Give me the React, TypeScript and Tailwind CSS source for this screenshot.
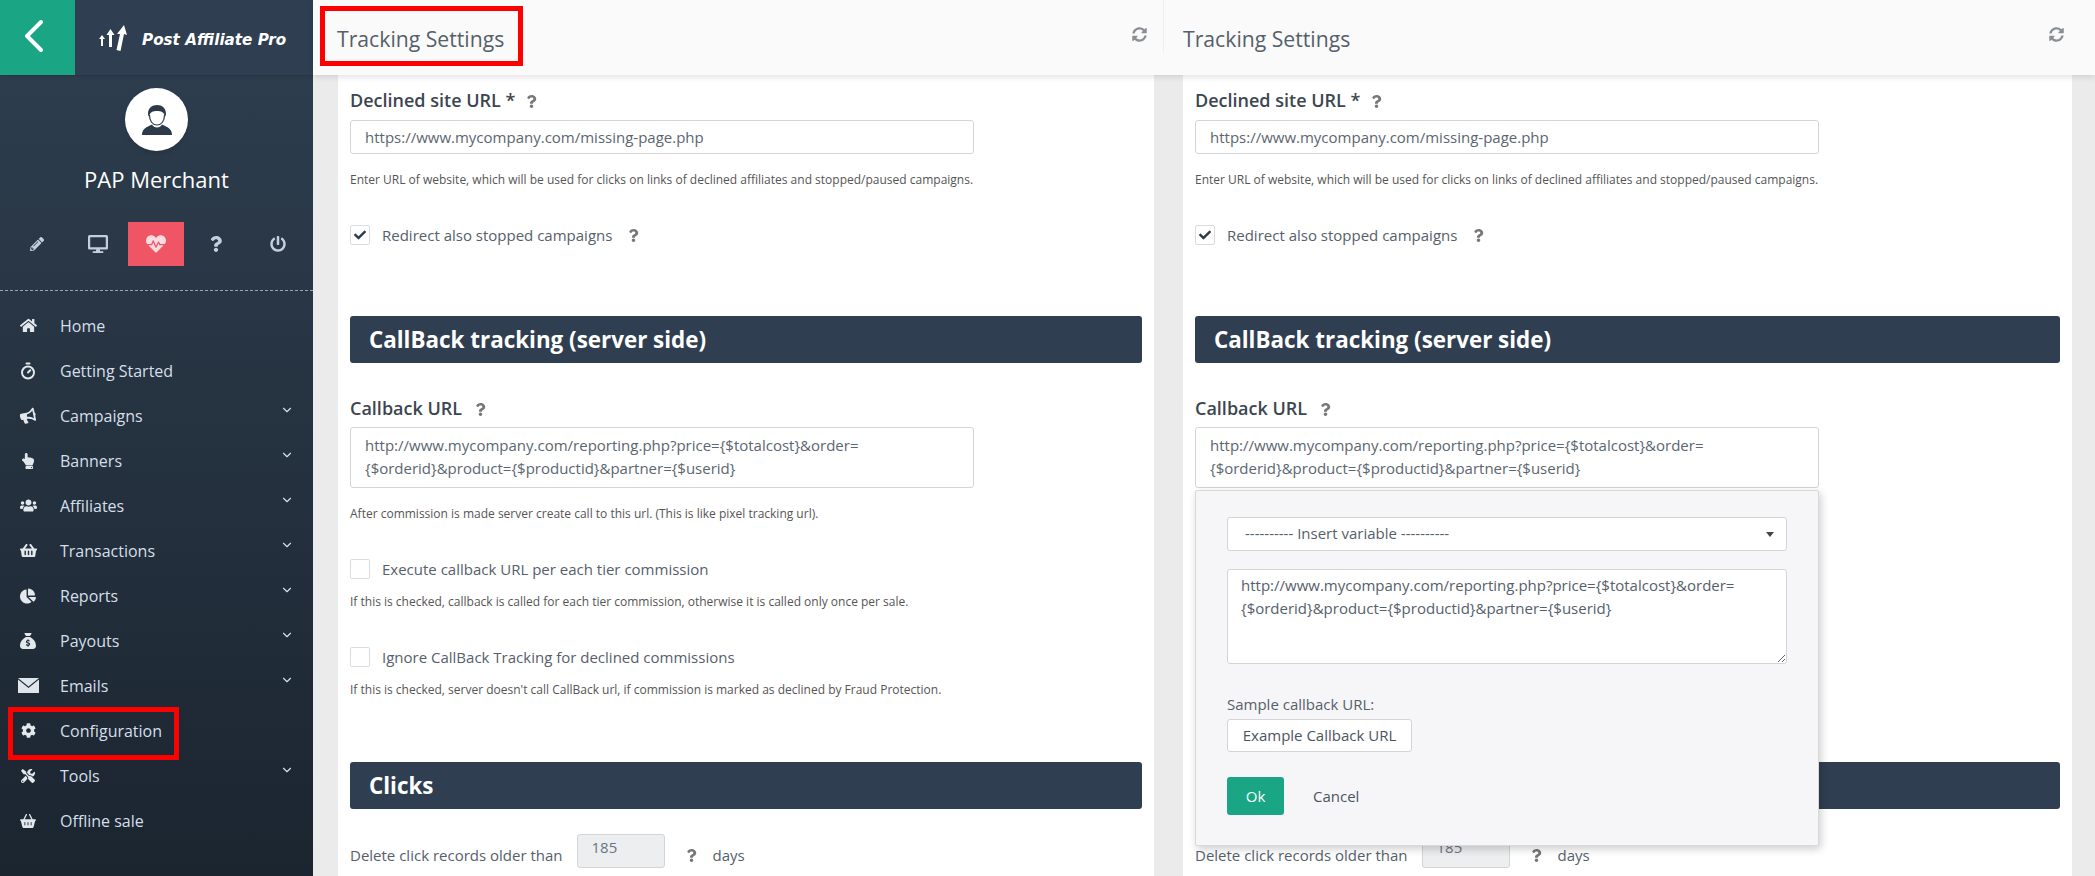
import React from 'react';
import { ChevronDown, ChevronLeft, Timer } from 'lucide-react';
import {
  FaBullhorn,
  FaChartPie,
  FaCheck,
  FaCog,
  FaDesktop,
  FaHandPointUp,
  FaHeartbeat,
  FaHome,
  FaPencilAlt,
  FaPowerOff,
  FaQuestion,
  FaShoppingBasket,
  FaSyncAlt,
  FaTools,
  FaUsers,
} from 'react-icons/fa';
import { FaBasketShopping, FaSackDollar } from 'react-icons/fa6';

const URL_TEXT = 'http://www.mycompany.com/reporting.php?price={$totalcost}&order={$orderid}&product={$productid}&partner={$userid}';

function MailIcon() {
  return (
    <svg width="21" height="15" viewBox="0 0 21 15">
      <path d="M0 0h21L10.500 8.500z" fill="#dfe5ea" />
      <path d="M0 1.500v13.500h21V1.500L10.500 10z" fill="#dfe5ea" />
    </svg>
  );
}

const menu = [
  { label: 'Home', icon: <FaHome size={17} /> },
  { label: 'Getting Started', icon: <Timer size={18} strokeWidth={2.6} /> },
  { label: 'Campaigns', icon: <FaBullhorn size={16} className="-rotate-12" />, sub: true },
  { label: 'Banners', icon: <FaHandPointUp size={16} />, sub: true },
  { label: 'Affiliates', icon: <FaUsers size={17} />, sub: true },
  { label: 'Transactions', icon: <FaShoppingBasket size={17} />, sub: true },
  { label: 'Reports', icon: <FaChartPie size={16} />, sub: true },
  { label: 'Payouts', icon: <FaSackDollar size={16} />, sub: true },
  { label: 'Emails', icon: <MailIcon />, sub: true },
  { label: 'Configuration', icon: <FaCog size={15} />, boxed: true },
  { label: 'Tools', icon: <FaTools size={14} />, sub: true },
  { label: 'Offline sale', icon: <FaBasketShopping size={16} /> },
];

function Logo() {
  return (
    <svg width="30" height="30" viewBox="0 0 30 30" fill="#fff">
      <path d="M1 15l3-4 3 4H5v7H3v-7z" />
      <path d="M8.500 11l4-6 4 6h-2.500v12h-3V11z" />
      <path d="M19 10l7-9 3 10-3-1-3.500 17-4-1 3.500-16z" />
    </svg>
  );
}

function Avatar() {
  return (
    <svg width="32" height="32" viewBox="0 0 32 32">
      <path d="M7 10c0-6 4-9 9-9s9 3 9 9c0 1-.4 2-1 2.500C23 8 20 7 16 7s-7 1-8 5.500C7.400 12 7 11 7 10z" fill="#2c3a4a" />
      <path d="M8.500 11c0 6 3 10 7.500 10s7.500-4 7.500-10" fill="none" stroke="#2c3a4a" strokeWidth="1.200" />
      <path d="M1 31c0-5 3-7 6-8.500 2-1 3-1.500 4-2 1 2 3 3 5 3s4-1 5-3c1 .5 2 1 4 2 3 1.500 6 3.500 6 8.500z" fill="#2c3a4a" />
    </svg>
  );
}

function Sidebar() {
  return (
    <aside className="w-[313px] shrink-0 h-full flex flex-col bg-linear-to-b from-[#2f3f50] to-[#1b2530]">
      <div className="h-[75px] flex items-center bg-[#2f3f51] shadow-sm">
        <div className="w-[75px] h-[75px] bg-[#1aa585] flex items-center justify-center text-white">
          <ChevronLeft size={56} strokeWidth={1.700} className="-mt-[3px] -ml-[7px]" />
        </div>
        <div className="ml-[23px] mt-[2px]"><Logo /></div>
        <span className="ml-[14px] mt-[6px] text-white text-[15.200px] font-bold italic font-['DejaVu_Sans',sans-serif]">Post Affiliate Pro</span>
      </div>
      <div className="flex flex-col items-center pt-[13px]">
        <div className="w-[63px] h-[63px] rounded-full bg-white flex items-center justify-center shadow-md">
          <Avatar />
        </div>
        <div className="mt-[13px] text-white text-[22px] leading-[30px]">PAP Merchant</div>
      </div>
      <div className="mt-[28px] flex items-center h-[44px] pl-[7px] text-[#c3d0dc]">
        <div className="w-[60px] flex justify-center"><FaPencilAlt size={14} /></div>
        <div className="w-[61px] flex justify-center"><FaDesktop size={20} /></div>
        <div className="w-[56px] h-[44px] bg-[#f05566] flex items-center justify-center text-[#fbdde0]"><FaHeartbeat size={20} /></div>
        <div className="w-[64px] flex justify-center"><FaQuestion size={16} /></div>
        <div className="w-[60px] flex justify-center"><FaPowerOff size={16} /></div>
      </div>
      <div className="mt-[24px] border-t border-dashed border-[#9aa5af]" />
      <nav className="pt-[12px]">
        {menu.map((item) => (
          <div key={item.label} className="relative h-[45px] flex items-center text-[#d5dfe8] text-[16px]">
            <div className="w-[60px] shrink-0 flex justify-center pr-[4px] text-[#e3e8ec]">{item.icon}</div>
            <span>{item.label}</span>
            {item.sub && <ChevronDown size={14} className="absolute left-[280px] top-[10px]" />}
            {item.boxed && <div className="absolute left-[8px] top-[-1px] w-[171px] h-[53px] border-[5px] border-[#f00]" />}
          </div>
        ))}
      </nav>
    </aside>
  );
}

function Help({ className = '' }: { className?: string }) {
  return <FaQuestion size={13} className={`text-[#777] ${className}`} />;
}

function Check({ checked, label }: { checked?: boolean; label: string }) {
  return (
    <div className="flex items-center h-[20px]">
      <div className="w-[20px] h-[20px] rounded-[2px] border border-[#dcdcdc] bg-white flex items-center justify-center text-[#2e3b49]">
        {checked && <FaCheck size={12} />}
      </div>
      <span className="ml-[12px] text-[15px] text-[#56606b]">{label}</span>
    </div>
  );
}

function SectionBar({ title }: { title: string }) {
  return (
    <div className="h-[47px] rounded-[3px] bg-[#2f3f51] flex items-center pl-[19px] text-white text-[22.400px] font-bold">{title}</div>
  );
}

function Popup() {
  return (
    <div className="absolute left-[32px] top-[415px] w-[624px] h-[356px] z-10 bg-[#f6f6f8] border border-[#d9d9d9] rounded-[2px] shadow-[2px_3px_8px_rgba(0,0,0,0.2)] pt-[26px] px-[31px] text-[15px]">
      <div className="h-[34px] bg-white border border-[#d5d5d5] rounded-[3px] flex items-center justify-between pl-[17px] pr-[12px] text-[#555f69]">
        <span className="-mt-[2px]">---------- Insert variable ----------</span>
        <span className="w-0 h-0 border-x-[4.500px] border-x-transparent border-t-[5px] border-t-[#444]" />
      </div>
      <textarea
        readOnly
        value={URL_TEXT}
        className="mt-[18px] block w-full h-[95px] bg-white border border-[#d5d5d5] rounded-[3px] px-[13px] py-[4px] text-[15px] leading-[23px] text-[#56606b] outline-none resize-y"
      />
      <div className="mt-[30px] text-[#56606b] leading-[20px]">Sample callback URL:</div>
      <div className="mt-[5px] w-[185px] h-[33px] bg-white border border-[#d5d5d5] rounded-[3px] flex items-center justify-center text-[#4b5560]">Example Callback URL</div>
      <div className="mt-[25px] flex items-center">
        <div className="w-[57px] h-[38px] rounded-[3px] bg-[#1aa585] text-white flex items-center justify-center">Ok</div>
        <span className="ml-[29px] text-[#4b5560]">Cancel</span>
      </div>
    </div>
  );
}

function Panel({ popup, className }: { popup?: boolean; className: string }) {
  return (
    <div className={`relative h-full overflow-hidden bg-[#ebebeb] ${className}`}>
      <div className="bg-white h-full pt-[13px] pl-[12px] pr-[12px]">
        <div className="flex items-center h-[24px]">
          <span className="text-[18px] font-semibold text-[#3c4650]">Declined site URL *</span>
          <Help className="ml-[10px] mt-[2px]" />
        </div>
        <input
          readOnly
          value="https://www.mycompany.com/missing-page.php"
          className="mt-[8px] block w-[624px] h-[34px] border border-[#d5d5d5] rounded-[3px] px-[14px] text-[15px] text-[#5b6670] outline-none"
        />
        <p className="mt-[18px] text-[12px] leading-[16px] text-[#555]">Enter URL of website, which will be used for clicks on links of declined affiliates and stopped/paused campaigns.</p>
        <div className="mt-[37px] flex items-center h-[20px]">
          <Check checked label="Redirect also stopped campaigns" />
          <Help className="ml-[15px]" />
        </div>
        <div className="mt-[71px]"><SectionBar title="CallBack tracking (server side)" /></div>
        <div className="flex items-center h-[24px] mt-[33px]">
          <span className="text-[18px] font-semibold text-[#3c4650]">Callback URL</span>
          <Help className="ml-[12px] mt-[2px]" />
        </div>
        <div className="mt-[7px] w-[624px] h-[61px] border border-[#d5d5d5] rounded-[3px] px-[14px] py-[6px] text-[15px] leading-[23px] text-[#5b6670] whitespace-nowrap">
          http://www.mycompany.com/reporting.php?price={'{$totalcost}'}&amp;order=<br />{'{$orderid}'}&amp;product={'{$productid}'}&amp;partner={'{$userid}'}
        </div>
        <p className="mt-[18px] text-[12px] leading-[16px] text-[#555]">After commission is made server create call to this url. (This is like pixel tracking url).</p>
        <div className="mt-[37px]"><Check label="Execute callback URL per each tier commission" /></div>
        <p className="mt-[15px] text-[12px] leading-[16px] text-[#555]">If this is checked, callback is called for each tier commission, otherwise it is called only once per sale.</p>
        <div className="mt-[37px]"><Check label="Ignore CallBack Tracking for declined commissions" /></div>
        <p className="mt-[15px] text-[12px] leading-[16px] text-[#555]">If this is checked, server doesn't call CallBack url, if commission is marked as declined by Fraud Protection.</p>
        <div className="mt-[64px]"><SectionBar title="Clicks" /></div>
        <div className="mt-[25px] flex items-center text-[15px] text-[#56606b]">
          <span className="mt-[8px]">Delete click records older than</span>
          <input
            readOnly
            value="185"
            className="ml-[14px] w-[88px] h-[34px] bg-[#eceef0] border border-[#d5d5d5] rounded-[3px] pl-[14px] pb-[8px] text-[15px] text-[#6b7580] outline-none"
          />
          <Help className="ml-[20px] mt-[8px]" />
          <span className="ml-[15px] mt-[8px]">days</span>
        </div>
      </div>
      {popup && <Popup />}
    </div>
  );
}

function Header({ boxed, className }: { boxed?: boolean; className: string }) {
  return (
    <div className={`relative h-[75px] flex items-start ${className}`}>
      <div className={`relative mt-[26px] text-[21.200px] leading-[26px] text-[#56606b] ${boxed ? 'ml-[24px]' : 'ml-[19px]'}`}>
        Tracking Settings
        {boxed && <div className="absolute -left-[17px] -top-[20px] w-[203px] h-[60px] border-[5px] border-[#f00]" />}
      </div>
      <FaSyncAlt size={15} className={`absolute top-[27px] text-[#8a8f94] ${boxed ? 'right-[16px]' : 'right-[31px]'}`} />
    </div>
  );
}

export default function App() {
  return (
    <div className="flex h-[876px] w-[2095px] overflow-hidden bg-[#ebebeb] font-['Open_Sans',sans-serif]">
      <Sidebar />
      <main className="flex-1 h-full flex flex-col min-w-0">
        <div className="relative z-20 flex bg-[#fafafa] shadow-[0_2px_6px_rgba(0,0,0,0.12)]">
          <Header boxed className="w-[850px]" />
          <div className="w-px h-[53px] bg-[#efefef]" />
          <Header className="flex-1" />
        </div>
        <div className="flex-1 flex min-h-0">
          <Panel className="w-[850px] pl-[25px] pr-[9px]" />
          <Panel popup className="flex-1 pl-[20px] pr-[23px]" />
        </div>
      </main>
    </div>
  );
}
